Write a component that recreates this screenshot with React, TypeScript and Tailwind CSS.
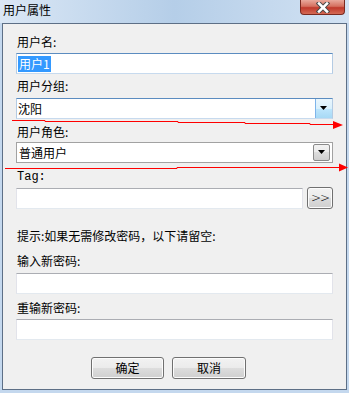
import React from "react";

const TextBox = ({ width = "w-[317px]", children }: { width?: string; children?: React.ReactNode }) => (
  <div
    className={`${width} h-[21px] bg-white border border-t-[#abadb3] border-x-[#e2e3ea] border-b-[#e3e9ef] flex items-center pl-[1px]`}
  >
    {children}
  </div>
);

const Label = ({ text, className = "" }: { text: string; className?: string }) => (
  <div className={`h-[14px] leading-[14px] pl-[1px] ${className}`}>{text}</div>
);

const Arrow = () => (
  <svg width="8" height="5" viewBox="0 0 8 5">
    <path d="M0 0h7l-3.5 4z" fill="#000" />
  </svg>
);

const WinButton = ({ text, className = "" }: { text: string; className?: string }) => (
  <div
    className={`h-[22px] rounded-[3px] border border-[#707070] bg-[linear-gradient(#f2f2f2,#ebebeb_50%,#dddddd_50%,#cfcfcf)] shadow-[inset_0_0_0_1px_#fcfcfc] flex items-center justify-center ${className}`}
  >
    {text}
  </div>
);

export default function App() {
  return (
    <div className="relative w-[349px] h-[393px] overflow-hidden bg-[#c4d8ee] text-[12px] text-black font-['Noto_Sans_CJK_SC',sans-serif]">
      {/* Title bar */}
      <div className="h-[23px] flex items-start bg-gradient-to-r from-[#dae7f5] via-[#b5cee8] to-[#d2e2f3]">
        <div className="pl-[3px] pt-[2px] leading-[16px]">用户属性</div>
        <div className="ml-auto mr-[4px] w-[45px] h-[15px] rounded-b-[4px] border border-t-0 border-[#7a2a20] bg-[linear-gradient(#e9a99c,#d5705f_45%,#c0392b_55%,#d46a55)] flex items-center justify-center">
          <svg width="14" height="11" viewBox="0 0 14 11">
            <path d="M3 1.5l8 8M11 1.5l-8 8" stroke="#4a4a4a" strokeWidth="4.5" strokeLinecap="square" />
            <path d="M3 1.5l8 8M11 1.5l-8 8" stroke="#ffffff" strokeWidth="2.5" strokeLinecap="square" />
          </svg>
        </div>
      </div>

      {/* Client area */}
      <div className="ml-[2px] w-[345px] h-[367px] border border-[#5d6f86] bg-[#f0f0f0] flex flex-col pl-[13px]">
        <Label text="用户名:" className="mt-[11px]" />
        <div className="mt-[4px] w-[317px] h-[21px] bg-white border border-t-[#5b8cc0] border-x-[#b4cbe3] border-b-[#c7daee] flex items-center pl-[1px]">
          <span className="bg-[#3399ff] text-white h-[16px] leading-[16px] px-[1px]">用户1</span>
        </div>

        <Label text="用户分组:" className="mt-[5px]" />
        <div className="mt-[5px] w-[317px] h-[21px] bg-white border border-t-[#5b8cc0] border-x-[#b4cbe3] border-b-[#c7daee] flex items-center pl-[1px]">
          <span className="flex-1">沈阳</span>
          <div className="w-[17px] h-[19px] border-l border-[#7eb4ea] bg-[linear-gradient(#eaf6fd,#d9f0fc_50%,#bee6fd_50%,#a7d9f5)] flex items-center justify-center">
            <Arrow />
          </div>
        </div>

        <Label text="用户角色:" className="mt-[6px]" />
        <div className="mt-[3px] w-[317px] h-[21px] bg-white border border-[#a2a2a2] flex items-center pl-[2px] pr-[2px]">
          <span className="flex-1">普通用户</span>
          <div className="w-[17px] h-[17px] rounded-[2px] border border-[#8a8a8a] bg-[linear-gradient(#f2f2f2,#ebebeb_50%,#dddddd_50%,#cfcfcf)] flex items-center justify-center">
            <Arrow />
          </div>
        </div>

        <div className="mt-[7px] h-[14px] leading-[14px] pl-[1px] text-[12px] text-black font-['Liberation_Mono',monospace]">Tag:</div>
        <div className="mt-[3px] flex items-center gap-[4px]">
          <TextBox width="w-[287px]" />
          <WinButton text=">>" className="w-[26px] h-[21px] text-[12px] tracking-[-1px] font-['DejaVu_Sans',sans-serif] font-extralight text-black" />
        </div>

        <Label text="提示:如果无需修改密码，以下请留空:" className="mt-[20px]" />
        <Label text="输入新密码:" className="mt-[11px]" />
        <div className="mt-[5px]">
          <TextBox />
        </div>
        <Label text="重输新密码:" className="mt-[7px]" />
        <div className="mt-[4px]">
          <TextBox />
        </div>

        <div className="mt-[17px] ml-[75px] flex gap-[8px]">
          <WinButton text="确定" className="w-[73px]" />
          <WinButton text="取消" className="w-[74px]" />
        </div>
      </div>

      {/* Red annotation arrows */}
      <svg className="absolute inset-0 pointer-events-none" width="349" height="393" viewBox="0 0 349 393">
        <polyline
          points="12,120.5 45,120.5 45,121.5 178,121.5 178,122.5 245,122.5 245,123.5 310,123.5 310,124.5 334,124.5"
          fill="none"
          stroke="#ff0000"
          strokeWidth="1"
        />
        <path d="M333 121l10 4-10 4z" fill="#ff0000" />
        <polyline points="5,168.5 177,168.5 177,167.5 340,167.5" fill="none" stroke="#ff0000" strokeWidth="1" />
        <path d="M339 163.5l9 4-9 4z" fill="#ff0000" />
      </svg>
    </div>
  );
}
